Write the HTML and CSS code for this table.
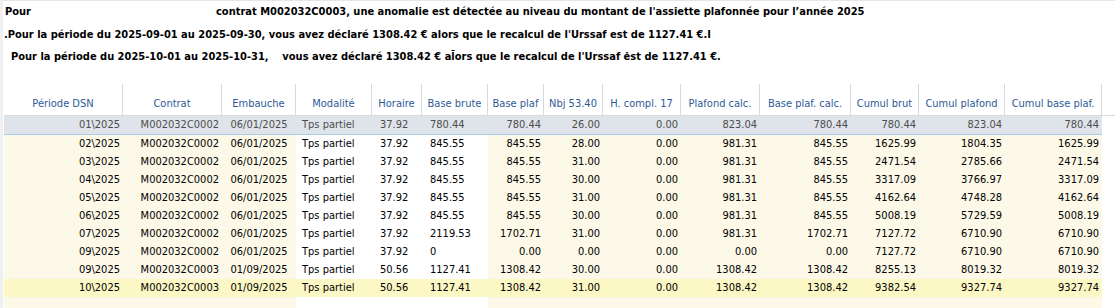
FILE: index.html
```html
<!DOCTYPE html>
<html lang="fr">
<head>
<meta charset="utf-8">
<title>Anomalie assiette plafonnée</title>
<link rel="stylesheet" href="styles.css">
</head>
<body>
<div class="messages">
  <div class="msg msg-1"><span class="msg-lead">Pour</span><span>contrat M002032C0003, une anomalie est détectée au niveau du montant de l'assiette plafonnée pour l’année 2025</span></div>
  <div class="msg msg-2">.Pour la période du 2025-09-01 au 2025-09-30, vous avez déclaré 1308.42 € alors que le recalcul de l'Urssaf est de 1127.41 €.I</div>
  <div class="msg msg-3">Pour la période du 2025-10-01 au 2025-10-31,    vous avez déclaré 1308.42 € al̄ors que le recalcul de l'Urssaf ėst de 1127.41 €.</div>
</div>

<div class="grid">
  <div class="row head">
    <div class="c">Période DSN</div>
    <div class="c">Contrat</div>
    <div class="c">Embauche</div>
    <div class="c">Modalité</div>
    <div class="c">Horaire</div>
    <div class="c">Base brute</div>
    <div class="c">Base plaf</div>
    <div class="c">Nbj 53.40</div>
    <div class="c">H. compl. 17</div>
    <div class="c">Plafond calc.</div>
    <div class="c">Base plaf. calc.</div>
    <div class="c">Cumul brut</div>
    <div class="c">Cumul plafond</div>
    <div class="c">Cumul base plaf.</div>
  </div>

  <div class="row data first">
    <div class="c r">01\2025</div><div class="c r">M002032C0002</div><div class="c m">06/01/2025</div><div class="c l w">Tps partiel</div><div class="c l2 w">37.92</div><div class="c l2 w">780.44</div><div class="c r">780.44</div><div class="c r">26.00</div><div class="c r">0.00</div><div class="c r">823.04</div><div class="c r">780.44</div><div class="c r">780.44</div><div class="c r">823.04</div><div class="c r">780.44</div>
  </div>
  <div class="row data">
    <div class="c r">02\2025</div><div class="c r">M002032C0002</div><div class="c m">06/01/2025</div><div class="c l w">Tps partiel</div><div class="c l2 w">37.92</div><div class="c l2 w">845.55</div><div class="c r">845.55</div><div class="c r">28.00</div><div class="c r">0.00</div><div class="c r">981.31</div><div class="c r">845.55</div><div class="c r">1625.99</div><div class="c r">1804.35</div><div class="c r">1625.99</div>
  </div>
  <div class="row data">
    <div class="c r">03\2025</div><div class="c r">M002032C0002</div><div class="c m">06/01/2025</div><div class="c l w">Tps partiel</div><div class="c l2 w">37.92</div><div class="c l2 w">845.55</div><div class="c r">845.55</div><div class="c r">31.00</div><div class="c r">0.00</div><div class="c r">981.31</div><div class="c r">845.55</div><div class="c r">2471.54</div><div class="c r">2785.66</div><div class="c r">2471.54</div>
  </div>
  <div class="row data">
    <div class="c r">04\2025</div><div class="c r">M002032C0002</div><div class="c m">06/01/2025</div><div class="c l w">Tps partiel</div><div class="c l2 w">37.92</div><div class="c l2 w">845.55</div><div class="c r">845.55</div><div class="c r">30.00</div><div class="c r">0.00</div><div class="c r">981.31</div><div class="c r">845.55</div><div class="c r">3317.09</div><div class="c r">3766.97</div><div class="c r">3317.09</div>
  </div>
  <div class="row data">
    <div class="c r">05\2025</div><div class="c r">M002032C0002</div><div class="c m">06/01/2025</div><div class="c l w">Tps partiel</div><div class="c l2 w">37.92</div><div class="c l2 w">845.55</div><div class="c r">845.55</div><div class="c r">31.00</div><div class="c r">0.00</div><div class="c r">981.31</div><div class="c r">845.55</div><div class="c r">4162.64</div><div class="c r">4748.28</div><div class="c r">4162.64</div>
  </div>
  <div class="row data">
    <div class="c r">06\2025</div><div class="c r">M002032C0002</div><div class="c m">06/01/2025</div><div class="c l w">Tps partiel</div><div class="c l2 w">37.92</div><div class="c l2 w">845.55</div><div class="c r">845.55</div><div class="c r">30.00</div><div class="c r">0.00</div><div class="c r">981.31</div><div class="c r">845.55</div><div class="c r">5008.19</div><div class="c r">5729.59</div><div class="c r">5008.19</div>
  </div>
  <div class="row data">
    <div class="c r">07\2025</div><div class="c r">M002032C0002</div><div class="c m">06/01/2025</div><div class="c l w">Tps partiel</div><div class="c l2 w">37.92</div><div class="c l2 w">2119.53</div><div class="c r">1702.71</div><div class="c r">31.00</div><div class="c r">0.00</div><div class="c r">981.31</div><div class="c r">1702.71</div><div class="c r">7127.72</div><div class="c r">6710.90</div><div class="c r">6710.90</div>
  </div>
  <div class="row data">
    <div class="c r">09\2025</div><div class="c r">M002032C0002</div><div class="c m">06/01/2025</div><div class="c l w">Tps partiel</div><div class="c l2 w">37.92</div><div class="c l2 w">0</div><div class="c r">0.00</div><div class="c r">0.00</div><div class="c r">0.00</div><div class="c r">0.00</div><div class="c r">0.00</div><div class="c r">7127.72</div><div class="c r">6710.90</div><div class="c r">6710.90</div>
  </div>
  <div class="row data">
    <div class="c r">09\2025</div><div class="c r">M002032C0003</div><div class="c m">01/09/2025</div><div class="c l w">Tps partiel</div><div class="c l2 w">50.56</div><div class="c l2 w">1127.41</div><div class="c r">1308.42</div><div class="c r">30.00</div><div class="c r">0.00</div><div class="c r">1308.42</div><div class="c r">1308.42</div><div class="c r">8255.13</div><div class="c r">8019.32</div><div class="c r">8019.32</div>
  </div>
  <div class="row data current">
    <div class="c r">10\2025</div><div class="c r">M002032C0003</div><div class="c m">01/09/2025</div><div class="c l w">Tps partiel</div><div class="c l2 w">50.56</div><div class="c l2 w">1127.41</div><div class="c r">1308.42</div><div class="c r">31.00</div><div class="c r">0.00</div><div class="c r">1308.42</div><div class="c r">1308.42</div><div class="c r">9382.54</div><div class="c r">9327.74</div><div class="c r">9327.74</div>
  </div>
  <div class="row data filler">
    <div class="c"></div><div class="c"></div><div class="c"></div><div class="c w"></div><div class="c w"></div><div class="c w"></div><div class="c"></div><div class="c"></div><div class="c"></div><div class="c"></div><div class="c"></div><div class="c"></div><div class="c"></div><div class="c"></div>
  </div>
</div>
</body>
</html>
```

FILE: styles.css
```css
html, body {
  margin: 0;
  padding: 0;
  background: #ffffff;
}

body {
  height: 308px;
  overflow: hidden;
  box-sizing: border-box;
  border-top: 1px solid #e6e6e6;
  border-left: 3px solid #f0f0f0;
  font-family: "DejaVu Sans Condensed", "Liberation Sans", sans-serif;
  font-size: 11px;
  color: #000;
}

.messages {
  display: flex;
  flex-direction: column;
}

.msg {
  height: 22px;
  line-height: 22px;
  font-weight: bold;
  white-space: pre;
}

.msg-1 {
  display: flex;
  padding-left: 2px;
}

.msg-lead {
  width: 211px;
}

.msg-2 {
  margin-top: 1px;
  padding-left: 1px;
}

.msg-3 {
  padding-left: 8px;
}

.grid {
  margin-top: 16px;
  margin-left: 1px;
}

.row {
  display: grid;
  grid-template-columns: 119px 99px 74px 76px 50px 66px 56px 59px 78px 79px 91px 68px 86px 97px;
}

.head {
  border-bottom: 1px solid #dadada;
}

.head .c {
  height: 31px;
  box-sizing: border-box;
  border-right: 1px solid #d3d9e0;
  color: #2d5a96;
  text-align: center;
  display: flex;
  align-items: flex-end;
  justify-content: center;
  padding-bottom: 5px;
  line-height: 13px;
  white-space: nowrap;
}

.data .c {
  height: 18px;
  line-height: 18px;
  background: #fdf9e8;
  white-space: nowrap;
  box-sizing: border-box;
}

.data .c.w {
  background: #ffffff;
}

.data .r { text-align: right; padding-right: 3px; }
.data .m { text-align: center; }
.data .l { text-align: left; padding-left: 6px; }
.data .l2 { text-align: left; padding-left: 8px; }

.data.first .c {
  background: #dfe4ea;
  color: #4d4d4d;
  border-bottom: 1px solid #a9cbe8;
  height: 19px;
  line-height: 18px;
}

.data.current .c {
  background: #fcf8c6;
}

.data.filler .c {
  height: 12px;
}
```
